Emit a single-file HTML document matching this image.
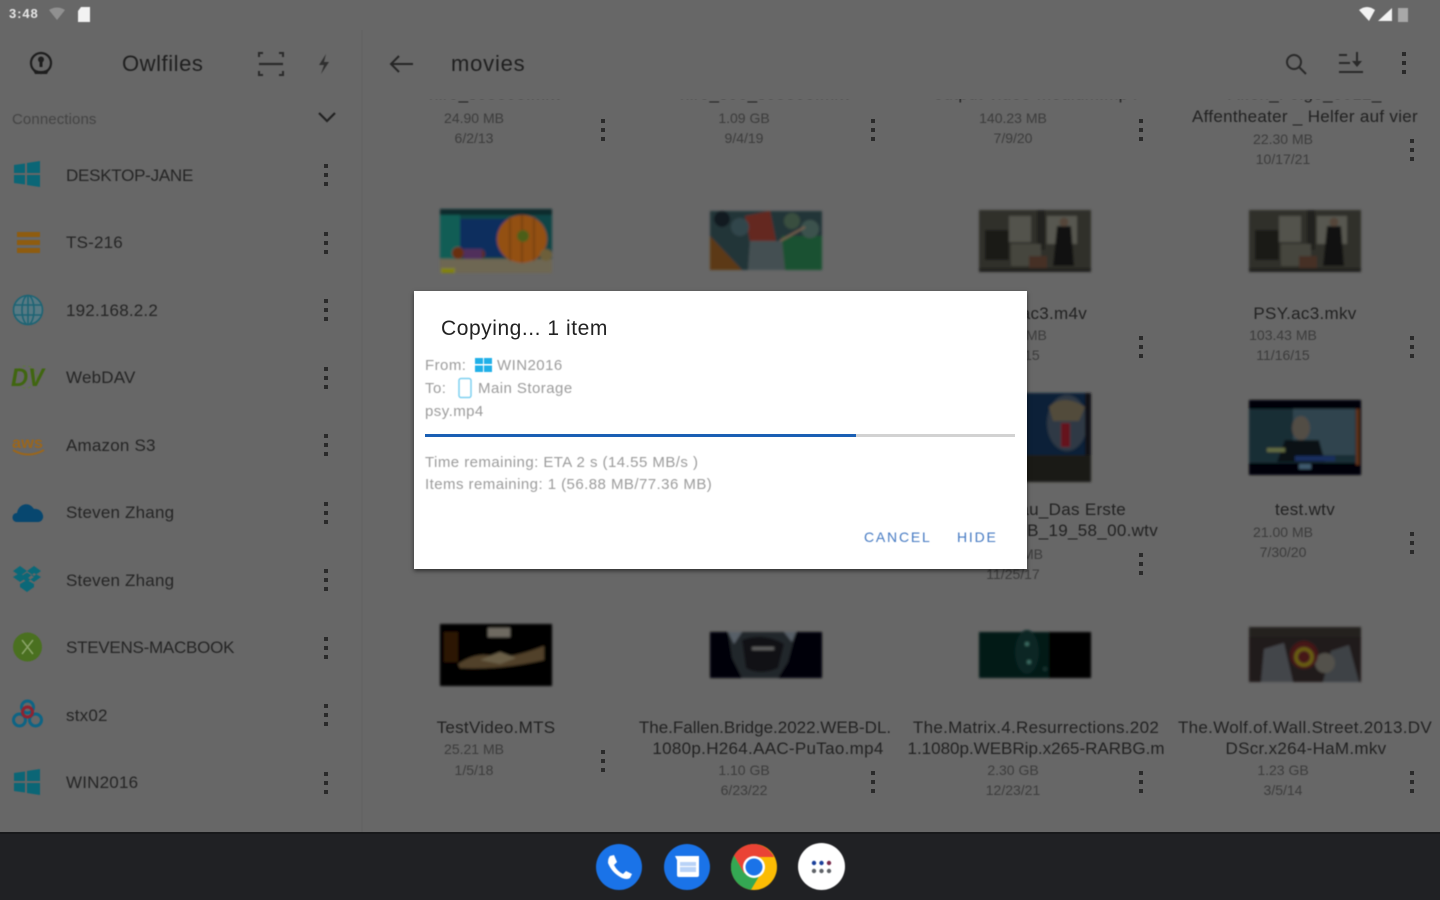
<!DOCTYPE html>
<html lang="en"><head><meta charset="utf-8"><title>Owlfiles</title>
<style>
html,body{margin:0;padding:0;width:1440px;height:900px;overflow:hidden;background:#676767;font-family:"Liberation Sans",sans-serif}
.a{position:absolute;white-space:nowrap}
.c{transform:translateX(-50%);text-align:center}
.t{filter:blur(.4px)}
.r{font-size:17px;color:#252525;left:66px;line-height:20px;letter-spacing:.2px}
.cap{letter-spacing:-.25px}
.n{font-size:17px;color:#222;line-height:21px;filter:blur(.4px);letter-spacing:.3px;margin-top:-1px}
.tight{letter-spacing:0}
.m{font-size:14px;color:#3c3c3c;line-height:20px;filter:blur(.5px)}
.d{font-size:15px;color:#9c9c9c;line-height:20px;left:425px;filter:blur(.4px);letter-spacing:.45px;margin-top:1px}
.v{position:absolute;width:4px}
.v i{display:block;width:4px;height:4px;background:#2a2a2a;margin-bottom:5px}
svg{position:absolute;overflow:visible}
.ic{filter:blur(.5px)}
.th{filter:brightness(.78) saturate(.9)}
</style></head><body>

<!-- status bar -->
<div class="a t" style="left:9px;top:6px;font-size:13px;line-height:16px;font-weight:bold;color:#e6e6e6;letter-spacing:.9px">3:48</div>
<svg class="ic" style="left:48px;top:6px" width="18" height="16" viewBox="0 0 18 16"><path d="M1 4Q9-1 17 4L9 14Z" fill="#909090"/></svg>
<svg class="ic" style="left:76px;top:6px" width="16" height="17" viewBox="0 0 16 17"><path d="M5 1H14V16H2V5Z" fill="#f2f2f2"/></svg>
<svg class="ic" style="left:1358px;top:5px" width="50" height="18" viewBox="0 0 50 18"><path d="M1 5Q9-1 17 5L11 16Z" fill="#f2f2f2"/><path d="M20 16L34 3V16Z" fill="#f2f2f2"/><rect x="40" y="3" width="10" height="14" fill="#a8a8a8"/></svg>

<!-- sidebar header -->
<svg class="ic" style="left:28px;top:51px" width="26" height="26" viewBox="0 0 26 26" fill="none"><circle cx="13" cy="12" r="10" stroke="#1e1e1e" stroke-width="2.200"/><circle cx="13" cy="8.500" r="3" fill="#1e1e1e"/><path d="M11.500 9h3v7h-3z" fill="#1e1e1e"/><path d="M4 17q9 6 18 0l-3 6h-12z" fill="#1e1e1e"/></svg>
<div class="a t" style="left:122px;top:51px;font-size:22px;line-height:26px;color:#1f1f1f;letter-spacing:.55px">Owlfiles</div>
<svg class="ic" style="left:258px;top:51px" width="26" height="26" viewBox="0 0 26 26" fill="none" stroke="#2a2a2a" stroke-width="2"><path d="M1 6V2H5M21 2H25V6M1 20V24H5M21 24H25V20"/><path d="M1 13H25" stroke-width="2.200"/></svg>
<svg class="ic" style="left:316px;top:53px" width="16" height="22" viewBox="0 0 16 22"><path d="M10 1L3 12H8L5 21L13 9H8Z" fill="#303030"/></svg>
<div class="a t" style="left:12px;top:111px;font-size:15px;line-height:18px;color:#444;letter-spacing:.1px">Connections</div>
<svg class="ic" style="left:317px;top:110px" width="20" height="14" viewBox="0 0 20 14" fill="none"><path d="M2 3L10 11L18 3" stroke="#222" stroke-width="2.200"/></svg>

<!-- sidebar rows -->
<div class="a r cap t" style="top:166px">DESKTOP-JANE</div>
<div class="a r t" style="top:233px">TS-216</div>
<div class="a r t" style="top:301px">192.168.2.2</div>
<div class="a r t" style="top:368px">WebDAV</div>
<div class="a r t" style="top:436px">Amazon S3</div>
<div class="a r t" style="top:503px">Steven Zhang</div>
<div class="a r t" style="top:571px">Steven Zhang</div>
<div class="a r cap t" style="top:638px">STEVENS-MACBOOK</div>
<div class="a r t" style="top:706px">stx02</div>
<div class="a r t" style="top:773px">WIN2016</div>

<div class="v" style="left:324px;top:164px"><i></i><i></i><i></i></div>
<div class="v" style="left:324px;top:232px"><i></i><i></i><i></i></div>
<div class="v" style="left:324px;top:299px"><i></i><i></i><i></i></div>
<div class="v" style="left:324px;top:367px"><i></i><i></i><i></i></div>
<div class="v" style="left:324px;top:434px"><i></i><i></i><i></i></div>
<div class="v" style="left:324px;top:502px"><i></i><i></i><i></i></div>
<div class="v" style="left:324px;top:569px"><i></i><i></i><i></i></div>
<div class="v" style="left:324px;top:637px"><i></i><i></i><i></i></div>
<div class="v" style="left:324px;top:704px"><i></i><i></i><i></i></div>
<div class="v" style="left:324px;top:772px"><i></i><i></i><i></i></div>

<!-- sidebar icons -->
<svg class="ic" style="left:13px;top:160px" width="28" height="28" viewBox="0 0 28 28"><path d="M1 5L12 3.500V13H1ZM14 3L27 1V13H14ZM1 15H12V24.500L1 23ZM14 15H27V27L14 25Z" fill="#0b6676"/></svg>
<svg class="ic" style="left:16px;top:231px" width="24" height="24" viewBox="0 0 24 24"><path d="M1 1H24V6H1ZM1 9H24V14H1ZM1 17H24V22H1Z" fill="#8e5c10"/></svg>
<svg class="ic" style="left:12px;top:294px" width="32" height="32" viewBox="0 0 32 32" fill="none" stroke="#1e6474" stroke-width="1.600"><circle cx="16" cy="16" r="14.500" fill="#587a84"/><ellipse cx="16" cy="16" rx="6" ry="14.500"/><path d="M16 1V31M2 11H30M2 21H30"/></svg>
<svg class="ic" style="left:11px;top:363px" width="34" height="30" viewBox="0 0 34 30"><circle cx="15" cy="14" r="11" fill="none" stroke="#5d7a3a" stroke-width="1" stroke-dasharray="3 3"/><text x="0" y="23" font-family="Liberation Sans" font-size="25" font-weight="bold" font-style="italic" fill="#406610" textLength="33" lengthAdjust="spacingAndGlyphs">DV</text></svg>
<svg class="ic" style="left:11px;top:432px" width="36" height="28" viewBox="0 0 36 28"><text x="1" y="16" font-family="Liberation Sans" font-size="16" font-weight="bold" fill="#9a661c" textLength="31" lengthAdjust="spacingAndGlyphs">aws</text><path d="M2 18Q17 27 33 18" fill="none" stroke="#9a661c" stroke-width="2"/></svg>
<svg class="ic" style="left:11px;top:500px" width="33" height="24" viewBox="0 0 33 24"><path d="M6 22C0 22 0 13 6 13C7 5 17 0 23 9C29 8 33 14 32 18C31 21 29 22 27 22Z" fill="#07476f"/></svg>
<svg class="ic" style="left:13px;top:565px" width="28" height="28" viewBox="0 0 28 28"><path d="M7 1L14 6L7 11L0 6ZM21 1L28 6L21 11L14 6ZM7 12L14 7.500L21 12L14 17ZM0 12L7 8L13 13L7 17ZM28 12L21 8L15 13L21 17ZM7 19L14 15L21 19V22L14 27L7 22Z" fill="#0b6878"/></svg>
<svg class="ic" style="left:13px;top:632px" width="29" height="30" viewBox="0 0 29 30"><circle cx="14.500" cy="15" r="14.500" fill="#4a7020"/><path d="M9 8L20 22M20 8L9 22" stroke="#8aa468" stroke-width="1.500"/></svg>
<svg class="ic" style="left:11px;top:700px" width="33" height="30" viewBox="0 0 33 30" fill="none" stroke-width="3"><circle cx="8.500" cy="20" r="6" stroke="#0e6484"/><circle cx="24.500" cy="20" r="6" stroke="#0e6484"/><circle cx="16.500" cy="7" r="6" stroke="#0e6484"/><circle cx="16.500" cy="12" r="5" stroke="#8e2331"/></svg>
<svg class="ic" style="left:13px;top:768px" width="28" height="28" viewBox="0 0 28 28"><path d="M1 5L12 3.500V13H1ZM14 3L27 1V13H14ZM1 15H12V24.500L1 23ZM14 15H27V27L14 25Z" fill="#0b6676"/></svg>

<!-- divider -->
<div class="a" style="left:361px;top:30px;width:2px;height:803px;background:#646464"></div>

<!-- toolbar -->
<svg class="ic" style="left:389px;top:53px" width="24" height="22" viewBox="0 0 24 22" fill="none" stroke="#262626" stroke-width="2"><path d="M24 11H2M10 3L2 11L10 19"/></svg>
<div class="a t" style="left:451px;top:51px;font-size:22px;line-height:26px;color:#1f1f1f;letter-spacing:.8px">movies</div>
<svg class="ic" style="left:1285px;top:53px" width="22" height="22" viewBox="0 0 22 22" fill="none" stroke="#2a2a2a" stroke-width="2"><circle cx="9" cy="9" r="7"/><path d="M14 14L21 21"/></svg>
<svg class="ic" style="left:1339px;top:50px" width="25" height="26" viewBox="0 0 25 26" fill="none" stroke="#2a2a2a" stroke-width="2"><path d="M0 5H8M0 13H11M0 22H24M18 2V14"/><path d="M13 11H23L18 17Z" fill="#2a2a2a" stroke="none"/></svg>
<div class="v" style="left:1402px;top:52px"><i></i><i></i><i></i></div>

<!-- clipped first row -->
<div class="a" style="left:362px;top:99px;width:1078px;height:735px;overflow:hidden">
  <div class="a n c" style="left:134px;top:-15px">hiro_s05e08.mkv</div>
  <div class="a n c" style="left:404px;top:-15px">hiro_s06_s05e08.mkv</div>
  <div class="a n c" style="left:674px;top:-15px">output-video-medium.mp4</div>
  <div class="a n c" style="left:943px;top:-15px">Affen_Folge_0012_</div>
</div>
<div class="a n c" style="left:1305px;top:107px">Affentheater _ Helfer auf vier</div>

<div class="a m c" style="left:474px;top:108px">24.90 MB</div><div class="a m c" style="left:474px;top:128px">6/2/13</div>
<div class="a m c" style="left:744px;top:108px">1.09 GB</div><div class="a m c" style="left:744px;top:128px">9/4/19</div>
<div class="a m c" style="left:1013px;top:108px">140.23 MB</div><div class="a m c" style="left:1013px;top:128px">7/9/20</div>
<div class="a m c" style="left:1283px;top:129px">22.30 MB</div><div class="a m c" style="left:1283px;top:149px">10/17/21</div>

<div class="v" style="left:601px;top:119px"><i></i><i></i><i></i></div>
<div class="v" style="left:871px;top:119px"><i></i><i></i><i></i></div>
<div class="v" style="left:1139px;top:119px"><i></i><i></i><i></i></div>
<div class="v" style="left:1410px;top:139px"><i></i><i></i><i></i></div>

<!-- thumbs row 1 -->
<svg class="th" style="left:440px;top:209px" width="112" height="64" viewBox="0 0 112 64"><defs><filter id="b"><feGaussianBlur stdDeviation="1.200"/></filter></defs><g filter="url(#b)"><rect width="112" height="64" fill="#0c5a5c"/><rect y="0" width="112" height="6" fill="#08383a"/><rect x="20" y="10" width="58" height="38" fill="#0a3a80"/><rect y="6" width="20" height="44" fill="#117a6e"/><rect y="50" width="112" height="14" fill="#8e8468"/><rect x="1" y="59" width="14" height="5" fill="#a8a800"/><ellipse cx="82" cy="30" rx="25" ry="24" fill="#c46508"/><path d="M70 8V52M82 6V54M94 8V52" stroke="#9a4e06" stroke-width="1.500"/><circle cx="83" cy="27" r="6" fill="#5e7a18"/><circle cx="18" cy="44" r="6" fill="#8c3a10"/><circle cx="40" cy="45" r="5" fill="#7e3510"/><rect x="24" y="40" width="18" height="10" fill="#6b3a7a"/><circle cx="106" cy="46" r="6" fill="#8e7a44"/></g></svg>
<svg class="th" style="left:710px;top:211px" width="112" height="59" viewBox="0 0 112 59"><g filter="url(#b)"><rect width="112" height="59" fill="#2a4448"/><rect x="72" y="25" width="40" height="34" fill="#1b6a3d"/><path d="M0 59V25L32 59Z" fill="#7a4a14"/><path d="M35 5L60 0L66 30L40 30Z" fill="#873226"/><path d="M40 30H72L75 59H38Z" fill="#56666a"/><circle cx="12" cy="8" r="8" fill="#16242c"/><circle cx="30" cy="16" r="9" fill="#3d5a62"/><circle cx="82" cy="10" r="8" fill="#47654f"/><circle cx="100" cy="18" r="9" fill="#4c6a64"/><path d="M70 30L95 16" stroke="#9a7a60" stroke-width="2"/></g></svg>
<svg class="th" style="left:979px;top:210px" width="112" height="62" viewBox="0 0 112 62"><g filter="url(#b)"><rect width="112" height="62" fill="#3c3c36"/><rect x="30" y="6" width="22" height="26" fill="#6a6a60"/><rect x="68" y="6" width="30" height="28" fill="#6f6f65"/><rect x="58" y="0" width="8" height="40" fill="#2c2c26"/><rect x="6" y="20" width="24" height="30" fill="#22211d"/><rect x="32" y="34" width="30" height="22" fill="#5a5a50"/><path d="M78 16H92L95 56H74Z" fill="#141412"/><circle cx="85" cy="12" r="4.500" fill="#6e5a4a"/><rect x="50" y="46" width="18" height="16" fill="#5c3c2e"/><rect y="58" width="112" height="4" fill="#2a2a26"/></g></svg>
<svg class="th" style="left:1249px;top:210px" width="112" height="62" viewBox="0 0 112 62"><g filter="url(#b)"><rect width="112" height="62" fill="#3c3c36"/><rect x="30" y="6" width="22" height="26" fill="#6a6a60"/><rect x="68" y="6" width="30" height="28" fill="#6f6f65"/><rect x="58" y="0" width="8" height="40" fill="#2c2c26"/><rect x="6" y="20" width="24" height="30" fill="#22211d"/><rect x="32" y="34" width="30" height="22" fill="#5a5a50"/><path d="M78 16H92L95 56H74Z" fill="#141412"/><circle cx="85" cy="12" r="4.500" fill="#6e5a4a"/><rect x="50" y="46" width="18" height="16" fill="#5c3c2e"/><rect y="58" width="112" height="4" fill="#2a2a26"/></g></svg>

<div class="a n c" style="left:1305px;top:304px">PSY.ac3.mkv</div>
<div class="a n c" style="left:1035px;top:304px">PSY.ac3.m4v</div>
<div class="a m c" style="left:1013px;top:325px">103.43 MB</div><div class="a m c" style="left:1013px;top:345px">11/16/15</div>
<div class="a m c" style="left:1283px;top:325px">103.43 MB</div><div class="a m c" style="left:1283px;top:345px">11/16/15</div>
<div class="v" style="left:1139px;top:336px"><i></i><i></i><i></i></div>
<div class="v" style="left:1410px;top:336px"><i></i><i></i><i></i></div>

<!-- thumbs row 2 -->
<svg class="th" style="left:979px;top:393px" width="112" height="89" viewBox="0 0 112 89"><g filter="url(#b)"><rect width="112" height="89" fill="#0b2a4c"/><rect y="62" width="112" height="27" fill="#22221c"/><ellipse cx="88" cy="30" rx="20" ry="28" fill="#3a4a5a"/><path d="M70 14Q84 0 106 14L100 28H74Z" fill="#6a6048"/><rect x="82" y="30" width="9" height="24" fill="#8a1622"/><rect x="106" width="6" height="62" fill="#14141e"/></g></svg>
<svg class="th" style="left:1249px;top:400px" width="112" height="75" viewBox="0 0 112 75"><g filter="url(#b)"><rect width="112" height="75" fill="#040509"/><rect y="9" width="110" height="54" fill="#1f3a44"/><rect x="44" y="9" width="62" height="46" fill="#3a5866"/><rect x="107" y="9" width="3" height="56" fill="#804016"/><ellipse cx="52" cy="28" rx="9" ry="12" fill="#6a6258"/><path d="M36 40H70L76 62H28Z" fill="#10141e"/><rect x="18" y="48" width="18" height="4" fill="#7e8a50"/><rect x="46" y="56" width="40" height="5" fill="#1a3a80"/><rect x="50" y="64" width="12" height="5" fill="#4d7390"/></g></svg>

<div class="a n" style="right:314px;top:500px">Tatortfrau_Das Erste</div>
<div class="a n" style="right:282px;top:521px">Erste_2020_08_0B_19_58_00.wtv</div>
<div class="a n c" style="left:1305px;top:500px">test.wtv</div>
<div class="a m c" style="left:1013px;top:544px">56.88 MB</div><div class="a m c" style="left:1013px;top:564px">11/25/17</div>
<div class="a m c" style="left:1283px;top:522px">21.00 MB</div><div class="a m c" style="left:1283px;top:542px">7/30/20</div>
<div class="v" style="left:1139px;top:553px"><i></i><i></i><i></i></div>
<div class="v" style="left:1410px;top:532px"><i></i><i></i><i></i></div>

<!-- thumbs row 3 -->
<svg class="th" style="left:440px;top:624px" width="112" height="62" viewBox="0 0 112 62"><g filter="url(#b)"><rect width="112" height="62" fill="#040302"/><rect x="4" y="8" width="14" height="30" fill="#3a1c06"/><path d="M18 40Q36 28 52 32T104 22V36Q60 46 20 44Z" fill="#6a5232"/><rect x="48" y="4" width="22" height="9" fill="#8e887a"/><path d="M40 36L60 28L76 34L60 40Z" fill="#8a7a58"/></g></svg>
<svg class="th" style="left:710px;top:632px" width="112" height="46" viewBox="0 0 112 46"><g filter="url(#b)"><rect width="112" height="46" fill="#05060a"/><path d="M18 0H86L78 30L68 46H32L22 26Z" fill="#2c3038"/><path d="M32 8Q54 0 74 12L68 36Q50 44 36 36Z" fill="#14161a"/><rect x="42" y="15" width="22" height="3" fill="#7a7a7a"/><path d="M18 0H32L24 12Z" fill="#6e7a86"/><path d="M74 0H86L82 10Z" fill="#6e7a86"/></g></svg>
<svg class="th" style="left:979px;top:632px" width="112" height="46" viewBox="0 0 112 46"><g filter="url(#b)"><rect width="112" height="46" fill="#020404"/><rect width="70" height="46" fill="#04201f"/><ellipse cx="48" cy="20" rx="12" ry="22" fill="#07302f"/><circle cx="48" cy="12" r="2" fill="#4a9082"/><circle cx="50" cy="30" r="2" fill="#4a9082"/><circle cx="66" cy="37" r="2.500" fill="#153e38"/></g></svg>
<svg class="th" style="left:1249px;top:627px" width="112" height="55" viewBox="0 0 112 55"><g filter="url(#b)"><rect width="112" height="55" fill="#2a2022"/><path d="M15 22L35 16L44 55H12Z" fill="#565a60"/><path d="M82 24L100 18L110 55H74Z" fill="#50545a"/><circle cx="76" cy="36" r="10" fill="#6a685e"/><circle cx="55" cy="28" r="14" fill="#5e1a1a"/><circle cx="55" cy="30" r="8" fill="none" stroke="#8a7a10" stroke-width="3.500"/><rect width="112" height="10" fill="#2e2a26"/></g></svg>

<div class="a n c" style="left:496px;top:718px">TestVideo.MTS</div>
<div class="a m c" style="left:474px;top:739px">25.21 MB</div><div class="a m c" style="left:474px;top:760px">1/5/18</div>
<div class="v" style="left:601px;top:750px"><i></i><i></i><i></i></div>

<div class="a n tight c" style="left:765px;top:718px">The.Fallen.Bridge.2022.WEB-DL.</div>
<div class="a n c" style="left:768px;top:739px">1080p.H264.AAC-PuTao.mp4</div>
<div class="a m c" style="left:744px;top:760px">1.10 GB</div><div class="a m c" style="left:744px;top:780px">6/23/22</div>
<div class="v" style="left:871px;top:771px"><i></i><i></i><i></i></div>

<div class="a n c" style="left:1036px;top:718px">The.Matrix.4.Resurrections.202</div>
<div class="a n tight c" style="left:1036px;top:739px">1.1080p.WEBRip.x265-RARBG.m</div>
<div class="a m c" style="left:1013px;top:760px">2.30 GB</div><div class="a m c" style="left:1013px;top:780px">12/23/21</div>
<div class="v" style="left:1139px;top:771px"><i></i><i></i><i></i></div>

<div class="a n c" style="left:1305px;top:718px">The.Wolf.of.Wall.Street.2013.DV</div>
<div class="a n c" style="left:1306px;top:739px">DScr.x264-HaM.mkv</div>
<div class="a m c" style="left:1283px;top:760px">1.23 GB</div><div class="a m c" style="left:1283px;top:780px">3/5/14</div>
<div class="v" style="left:1410px;top:771px"><i></i><i></i><i></i></div>

<!-- dialog -->
<div class="a" style="left:414px;top:291px;width:613px;height:278px;background:#fff;box-shadow:0 2px 4px rgba(0,0,0,.55)"></div>
<div class="a t" style="left:441px;top:317px;font-size:21px;line-height:24px;color:#222;letter-spacing:.55px;filter:blur(.3px)">Copying... 1 item</div>
<div class="a d" style="top:355px">From:</div>
<svg class="ic" style="left:475px;top:357px" width="17" height="16" viewBox="0 0 17 16"><path d="M0 1H8V7H0ZM9 1H17V7H9ZM0 8.500H8V15H0ZM9 8.500H17V15H9Z" fill="#20b0e8"/></svg>
<div class="a d" style="left:497px;top:355px">WIN2016</div>
<div class="a d" style="top:378px">To:</div>
<svg class="ic" style="left:457px;top:377px" width="16" height="22" viewBox="0 0 16 22" fill="none"><rect x="2" y="1.500" width="12" height="19" rx="2" stroke="#7ed0f0" stroke-width="1.500"/></svg>
<div class="a d" style="left:478px;top:378px">Main Storage</div>
<div class="a d" style="top:401px">psy.mp4</div>
<div class="a" style="left:425px;top:434px;width:590px;height:3px;background:#d2d2d2"></div>
<div class="a" style="left:425px;top:434px;width:431px;height:3px;background:#1a5fb4"></div>
<div class="a d" style="top:452px">Time remaining: ETA 2 s (14.55 MB/s )</div>
<div class="a d" style="top:474px">Items remaining: 1 (56.88 MB/77.36 MB)</div>
<div class="a t" style="left:864px;top:528px;font-size:14px;line-height:18px;color:#4479c2;letter-spacing:1.800px">CANCEL</div>
<div class="a t" style="left:957px;top:528px;font-size:14px;line-height:18px;color:#4479c2;letter-spacing:1.800px">HIDE</div>

<!-- dock -->
<div class="a" style="left:0;top:832px;width:1440px;height:68px;background:#202124;border-top:2px solid #18191b;box-sizing:border-box"></div>
<svg class="ic" style="left:596px;top:844px" width="46" height="46" viewBox="0 0 46 46"><circle cx="23" cy="23" r="23" fill="#1a73e8"/><path d="M14 12L18 11L21 18L18 21Q21 27 27 30L30 27L36 30L34 34Q31 36 26 34Q16 29 12 19Q12 14 14 12Z" fill="#fff"/></svg>
<svg class="ic" style="left:664px;top:844px" width="46" height="46" viewBox="0 0 46 46"><circle cx="23" cy="23" r="23" fill="#1a73e8"/><path d="M11 12H35V31Q35 33 33 33H15Q13 33 13 31V16Z" fill="#fff"/><path d="M16 18H32V22H16ZM16 23H32V28H16Z" fill="#b9d3f7"/></svg>
<svg class="ic" style="left:731px;top:844px" width="46" height="46" viewBox="0 0 46 46"><circle cx="23" cy="23" r="23" fill="#fbbc04"/><path d="M23 0A23 23 0 0 0 3 11.500L13 29L23 13H43A23 23 0 0 0 23 0Z" fill="#ea4335"/><path d="M3 11.500A23 23 0 0 0 20 45.800L30 29L13 29Z" fill="#34a853"/><circle cx="23" cy="23" r="11" fill="#fff"/><circle cx="23" cy="23" r="8.500" fill="#1a73e8"/></svg>
<svg class="ic" style="left:798px;top:843px" width="47" height="47" viewBox="0 0 47 47"><circle cx="23.500" cy="23.500" r="23.500" fill="#fff"/><g fill="#5f6368"><circle cx="16" cy="28" r="2.200"/><circle cx="23.500" cy="28" r="2.200"/><circle cx="31" cy="28" r="2.200"/></g><circle cx="16" cy="20" r="2.200" fill="#1a3f9a"/><circle cx="23.500" cy="20" r="2.200" fill="#1a3f9a"/><circle cx="31" cy="20" r="2.200" fill="#7a2a4a"/></svg>

</body></html>
